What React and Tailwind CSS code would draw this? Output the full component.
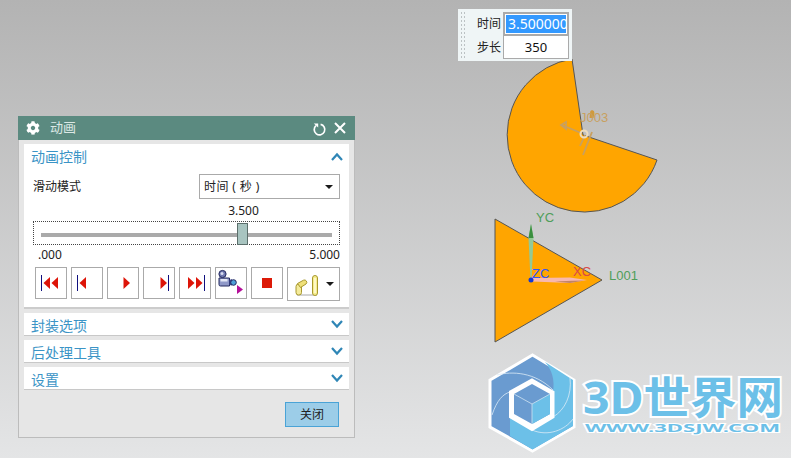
import React from 'react';
import { FaCog } from 'react-icons/fa';

const Caret = () => (
  <svg width="8" height="4" viewBox="0 0 8 4" className="block">
    <path d="M0 0H8L4 4Z" fill="#1a1a1a" />
  </svg>
);

const Chevron = ({ up }) => (
  <svg width="12" height="9" viewBox="0 0 12 9" className="block">
    <path d={up ? 'M1 8L6 2.5L11 8' : 'M1 1L6 6.5L11 1'} fill="none" stroke="#2f86b6" strokeWidth="2.2" />
  </svg>
);

const Bar = ({ x }) => <rect x={x} y="8" width="1" height="16" fill="#10107f" />;
const Left = ({ x }) => <path d={`M${x} 16L${x + 6.5} 10V22Z`} fill="#dd1408" />;
const Right = ({ x }) => <path d={`M${x} 10L${x + 6.5} 16L${x} 22Z`} fill="#dd1408" />;

const playerIcons = [
  <><Bar x={6} /><Left x={8.5} /><Left x={16.5} /></>,
  <><Bar x={6} /><Left x={8.5} /></>,
  <Right x={16.5} />,
  <><Right x={17.5} /><Bar x={25} /></>,
  <><Right x={9} /><Right x={17} /><Bar x={25} /></>,
  <>
    <circle cx="7.5" cy="7" r="3.6" fill="#6f78b0" stroke="#23285f" strokeWidth="1" />
    <circle cx="7" cy="6.5" r="1.5" fill="#d8dcf0" />
    <path d="M4 11H14.5V19H5.5Q4 19 4 17.5Z" fill="#8f98c8" stroke="#23285f" strokeWidth="1" />
    <rect x="5.5" y="12" width="7" height="2.5" fill="#e4e7f5" />
    <path d="M14.5 13L17 12V18.5L14.5 18Z" fill="#3f4a90" />
    <circle cx="18.5" cy="15.5" r="2.8" fill="#4f9fd8" stroke="#23285f" strokeWidth="1" />
    <path d="M22 18L28 22.5L22 27Z" fill="#b5109a" />
  </>,
  <rect x="11" y="11" width="10" height="10" fill="#dc1a08" />,
];

const Section = ({ title }) => (
  <div className="h-[23px] bg-white border-b border-[#c8c8c8] flex justify-between pl-[7px] pr-[6px]">
    <span className="text-sm leading-[25px] text-[#3b94c6]">{title}</span>
    <div className="pt-[7px]"><Chevron /></div>
  </div>
);

const Dialog = () => (
  <div className="absolute left-[18px] top-[116px] w-[337px] h-[322px] bg-[#e6e6e6] border border-[#bcbcbc] flex flex-col">
    <div className="h-[24px] -mx-px -mt-px bg-[#5b8a80] flex items-center pl-[8px] pr-[9px] shrink-0">
      <FaCog className="text-white w-[14px] h-[14px]" />
      <span className="ml-[10px] text-[13px] text-[#dce8e5]">动画</span>
      <svg width="15" height="15" viewBox="0 0 15 15" className="ml-auto mt-[3px]">
        <path d="M4 3.6A5.3 5.3 0 1 0 8.6 2.4" fill="none" stroke="#fff" strokeWidth="1.7" />
        <path d="M1.8 1.5H6.2V5.6Z" fill="#fff" />
      </svg>
      <svg width="12" height="12" viewBox="0 0 12 12" className="ml-[7px]">
        <path d="M1 1L11 11M11 1L1 11" stroke="#fff" strokeWidth="2" />
      </svg>
    </div>

    <div className="px-[5px] pt-[4px] flex flex-col gap-[4px]">
      <div className="h-[165px] bg-white border-b-2 border-[#cccccc] pl-[9px] pr-[9px] text-xs text-[#222]">
        <div className="h-[26px] -ml-[2px] -mr-[3px] flex justify-between">
          <span className="text-sm leading-[26px] text-[#3b94c6]">动画控制</span>
          <div className="pt-[8px]"><Chevron up /></div>
        </div>
        <div className="h-[25px] mt-[4px] flex items-center justify-between">
          <span>滑动模式</span>
          <div className="w-[141px] h-[25px] border border-[#aaaaaa] flex items-center justify-between pl-[4px] pr-[6px]">
            <span className="tracking-[0.4px]">时间 ( 秒 )</span>
            <Caret />
          </div>
        </div>
        <div className="h-[22px] leading-[24px] text-center pl-[114px]">3.500</div>
        <div className="relative h-[24px] border border-dotted border-[#444] flex items-center px-[7px] pt-[4px]">
          <div className="h-[4px] w-full bg-[#aaaaaa]" />
          <div className="absolute left-[203px] top-[1px] w-[11px] h-[22px] bg-[#a8c4c0] border border-[#5c6f6c]" />
        </div>
        <div className="flex justify-between h-[22px] leading-[20px] pl-[5px]">
          <span>.000</span>
          <span>5.000</span>
        </div>
        <div className="flex items-start gap-[4px] pl-[2px]">
          {playerIcons.map((icon, i) => (
            <div key={i} className="w-[32px] h-[32px] border border-[#aaaaaa] bg-white relative">
              <svg width="32" height="32" viewBox="0 0 32 32" className="absolute -left-px -top-px">{icon}</svg>
            </div>
          ))}
          <div className="w-[53px] h-[34px] border border-[#aaaaaa] flex items-center justify-between pr-[5px]">
            <svg width="32" height="32" viewBox="0 0 32 32" className="block">
              <path d="M9 27H29" stroke="#a8a8a8" strokeWidth="1" />
              <rect x="8" y="16" width="5.5" height="11" rx="2.5" fill="#f4eb9a" stroke="#a8982e" strokeWidth="1" />
              <path d="M9.5 15.5L15.5 12.2A2.3 2.3 0 0 1 18 16L12.5 19.5Z" fill="#efe07a" stroke="#a8982e" strokeWidth="1" />
              <rect x="24.5" y="7.5" width="5" height="20" rx="2.5" fill="#f6ee8e" stroke="#a8982e" strokeWidth="1" />
              <rect x="26.2" y="10" width="1.6" height="15" fill="#fffbd8" />
            </svg>
            <Caret />
          </div>
        </div>
      </div>
      <Section title="封装选项" />
      <Section title="后处理工具" />
      <Section title="设置" />
    </div>

    <div className="flex justify-end pr-[15px] pt-[12px]">
      <div className="w-[54px] h-[25px] bg-[#9ccde8] border border-[#4aa3d6] text-center text-xs leading-[23px] text-[#222]">关闭</div>
    </div>
  </div>
);

const TimeBox = () => (
  <div className="absolute left-[458px] top-[9px] w-[114px] h-[52px] bg-[#eff5f6] flex text-xs text-[#222]">
    <div className="w-[6px] ml-[2px] mt-[2px] h-[48px] bg-[radial-gradient(circle,#bcc2c4_0.9px,transparent_1.1px)] bg-[length:3px_4px]" />
    <div className="ml-[11px] w-[24px] flex flex-col pt-[3px]">
      <span className="h-[24px] leading-[23px]">时间</span>
      <span className="h-[23px] leading-[23px]">步长</span>
    </div>
    <div className="ml-[2px] w-[66px] pt-[3px] flex flex-col">
      <div className="h-[24px] border-2 border-[#aaaaaa] bg-white p-px overflow-hidden">
        <div className="h-[18px] pl-[2px] bg-[#3399ff] text-white text-sm leading-[18px] whitespace-nowrap overflow-hidden">3.5000000</div>
      </div>
      <div className="h-[23px] border border-t-0 border-[#aaaaaa] bg-white text-center text-[13px] leading-[22px] text-[#111]">350</div>
    </div>
  </div>
);

const Viewport = () => (
  <svg width="791" height="458" viewBox="0 0 791 458" className="absolute left-0 top-0">
    <path d="M583 135L572 59A77 77 0 1 0 657 160Z" fill="#ffa500" stroke="#555" strokeWidth="1" />
    <path d="M495 219L602 280L495 342Z" fill="#ffa500" stroke="#555" strokeWidth="1" />

    {/* joint gizmo */}
    <g fill="none" stroke="#c9a05f" strokeWidth="1.8">
      <path d="M562 125L581 133" />
      <path d="M561 125L566 122L566 129Z" />
      <path d="M592 132L583 155" />
      <path d="M585 135L580 146" />
    </g>
    <circle cx="584" cy="134" r="3.5" fill="none" stroke="#ecdcc0" strokeWidth="2" />
    <path d="M592 110a3 3 0 0 1 2.5 3l-1 5h-4l0.5-5a3 3 0 0 1 2-3Z" fill="#d09a3c" />
    <text x="580" y="122" fontSize="13" fill="#c8a060" fontFamily="Liberation Sans, sans-serif">J003</text>

    {/* csys */}
    <path d="M531 224L533.5 238L531.5 280L530.5 280L528.5 238Z" fill="#93c995" />
    <path d="M531 224L533.5 238H528.5Z" fill="#3a8f3f" />
    <path d="M532 278L570 277.6L587 280L570 283L532 281.5Z" fill="#f8b8ae" />
    <path d="M555 281.4L572 280.8L584 280.6L570 283Z" fill="#c08468" />
    <circle cx="531" cy="280" r="2.5" fill="#1038d8" />
    <text x="536" y="222" fontSize="13" fill="#4f9e5a" fontFamily="Liberation Sans, sans-serif">YC</text>
    <text x="532" y="278" fontSize="13" fill="#2f55ff" fontFamily="Liberation Sans, sans-serif">ZC</text>
    <text x="573" y="276" fontSize="13" fill="#d84848" fontFamily="Liberation Sans, sans-serif">XC</text>
    <text x="609" y="280" fontSize="13" fill="#4f9e5a" fontFamily="Liberation Sans, sans-serif">L001</text>
  </svg>
);

const Logo = () => (
  <svg width="311" height="108" viewBox="480 350 311 108" className="absolute left-[480px] top-[350px]">
    <path d="M532.5 355L574 380V427L532.5 451L490 427V380Z" fill="#6a9bd0" stroke="#fff" strokeWidth="3" />
    <path d="M545 362L573 380V426L532.5 449.5L510 436V417L532 430L553 417V392C555 380 552 370 545 362Z" fill="#6cc0e8" />
    <g fill="none" stroke="#dcebf6" strokeWidth="0.8">
      <path d="M497 375C512 371 535 372 553 390" />
      <path d="M492 415C497 400 503 394 510 392" />
      <path d="M532 430C548 437 565 430 573 419" />
      <path d="M553 417C565 410 572 395 570 378" />
    </g>
    <path d="M532 380L553 392V417L532 429.5L510.5 417V392Z" fill="#fff" stroke="#fff" strokeWidth="3" />
    <path d="M532 384L550 394V414L532 424L514 414V394Z" fill="#6a9bd0" />
    <path d="M532 404L550 394V414L532 424Z" fill="#6cc0e8" />
    <path d="M514 394L532 404L550 394M532 404V424" fill="none" stroke="#cfe3f3" strokeWidth="0.8" />
    <text x="583" y="414" fontSize="44" fontWeight="700" fill="#6cc0e8" stroke="#fff" strokeWidth="4" paintOrder="stroke" textLength="200" lengthAdjust="spacingAndGlyphs" fontFamily="Noto Sans, Noto Sans CJK SC, sans-serif">3D世界网</text>
    <text x="585" y="432" fontSize="11" fontWeight="700" fill="#6cc0e8" stroke="#fff" strokeWidth="2" paintOrder="stroke" textLength="195" lengthAdjust="spacingAndGlyphs" fontFamily="Noto Sans, sans-serif">WWW.3DSJW.COM</text>
  </svg>
);

export default function App() {
  return (
    <div className="relative w-[791px] h-[458px] overflow-hidden bg-linear-to-b from-[#b3b3b3] to-[#e4e5e6] font-['Noto_Sans','Noto_Sans_CJK_SC',sans-serif]">
      <Viewport />
      <TimeBox />
      <Dialog />
      <Logo />
    </div>
  );
}
